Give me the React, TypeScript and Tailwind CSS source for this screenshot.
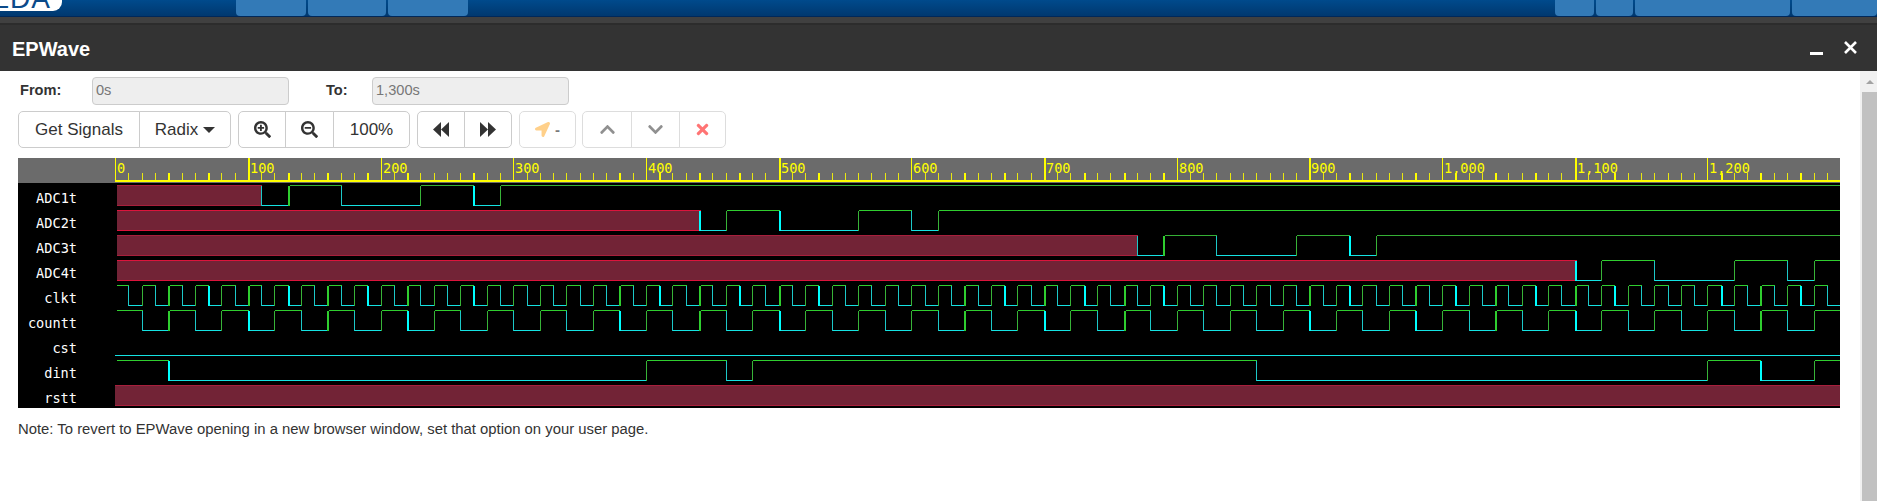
import { FaSearchPlus, FaSearchMinus, FaLocationArrow, FaChevronUp, FaChevronDown, FaTimes } from "react-icons/fa";

type Ev = [number, "x" | 0 | 1];
type Signal = { name: string; events: Ev[]; flush?: boolean; dim?: boolean };

const END = 1300;

// pixel columns where the canvas drew a 2px edge
const THICK = new Set([
  40, 70, 100, 130, 160, 190, 220, 270, 380, 410, 440, 470, 500, 530, 640, 670, 700, 730, 760, 790, 900, 930, 980, 1010,
  1040, 1070, 1100, 1130, 1210, 1240, 1270, 1300,
]);

const px = (t: number) => Math.floor(115.7 + 1.3268 * t) - 115;
const lw = (t: number) => (THICK.has(t) ? 2 : 1);

const square = (period: number): Ev[] => {
  const out: Ev[] = [];
  for (let t = 0; t < END; t += period / 2) out.push([t, (t / (period / 2)) % 2 === 0 ? 1 : 0]);
  return out;
};

const SIGNALS: Signal[] = [
  { name: "ADC1t", dim: true, events: [[0, "x"], [110, 0], [130, 1], [170, 0], [230, 1], [270, 0], [290, 1]] },
  { name: "ADC2t", events: [[0, "x"], [440, 0], [460, 1], [500, 0], [560, 1], [600, 0], [620, 1]] },
  { name: "ADC3t", dim: true, events: [[0, "x"], [770, 0], [790, 1], [830, 0], [890, 1], [930, 0], [950, 1]] },
  { name: "ADC4t", events: [[0, "x"], [1100, 0], [1120, 1], [1160, 0], [1220, 1], [1260, 0], [1280, 1]] },
  { name: "clkt", events: square(20) },
  { name: "countt", events: square(40) },
  { name: "cst", flush: true, events: [[0, 0]] },
  { name: "dint", events: [[0, 1], [40, 0], [400, 1], [460, 0], [480, 1], [860, 0], [1200, 1], [1240, 0], [1280, 1]] },
  { name: "rstt", flush: true, dim: true, events: [[0, "x"]] },
];

function Row({ signal, index }: { signal: Signal; index: number }) {
  const high = 27 + 25 * index;
  const low = high + 20;
  const green = signal.dim ? "#35b035" : "#2fce2f";
  const thinGreen = "#37b337";
  return (
    <g shapeRendering="crispEdges">
      {signal.events.map(([t, v], k) => {
        const next = k + 1 < signal.events.length ? signal.events[k + 1][0] : END + 20;
        const first = k === 0;
        const from = first ? (signal.flush ? px(t) : px(t) + 2) : px(t) + lw(t);
        const to = px(next) + 1;
        if (v === "x") {
          const edge = signal.dim ? "#a81f3c" : "#dc143c";
          return (
            <g key={t}>
              <rect x={from} y={high} width={to - from} height={21} fill="#722336" />
              <rect x={from} y={high} width={to - from} height={1} fill={edge} />
              <rect x={from} y={low} width={to - from} height={1} fill={edge} />
              <rect x={px(next)} y={high} width={lw(next)} height={21} fill={edge} />
            </g>
          );
        }
        const y = v === 1 ? high : low;
        const flat = v === 1 ? green : "#14e2e2";
        const wall = v === 1 ? (THICK.has(t) ? "#2fce2f" : thinGreen) : THICK.has(t) ? "#00ffff" : "#1cc8c8";
        return (
          <g key={t}>
            <rect x={from} y={y} width={to - from} height={1} fill={flat} />
            {!first && <rect x={px(t)} y={high + 1} width={lw(t)} height={20} fill={wall} />}
          </g>
        );
      })}
    </g>
  );
}

function Ruler() {
  const ticks: number[] = [];
  for (let t = 0; t <= END; t += 10) ticks.push(t);
  return (
    <g>
      <rect x={0} y={0} width={1725} height={25} fill="#6b6b6b" shapeRendering="crispEdges" />
      {ticks.map((t) => (
        <rect
          key={t}
          x={px(t)}
          y={t % 100 === 0 ? 0 : 15}
          width={lw(t)}
          height={t % 100 === 0 ? 22 : 7}
          fill="#ffff00"
          opacity={THICK.has(t) || t % 100 === 0 ? 1 : 0.85}
          shapeRendering="crispEdges"
        />
      ))}
      <rect x={0} y={22} width={1725} height={2} fill="#ffff00" shapeRendering="crispEdges" />
      {ticks
        .filter((t) => t % 100 === 0 && t < END)
        .map((t) => (
          <text key={t} x={px(t) + 2} y={15} fill="#ffff00" className="font-['DejaVu_Sans_Mono',monospace] text-[13.6px]">
            {t.toLocaleString("en-US")}
          </text>
        ))}
    </g>
  );
}

function WavePanel() {
  return (
    <div className="mt-[10px] flex h-[250px] w-[1822px] overflow-hidden bg-black">
      <div className="w-[97px] shrink-0">
        <div className="mb-[2px] h-[25px] bg-[#6b6b6b]" />
        {SIGNALS.map((s) => (
          <div
            key={s.name}
            className="flex h-[25px] items-center justify-end pr-[38px] pt-[2px] font-['DejaVu_Sans_Mono',monospace] text-[13.6px] text-white"
          >
            {s.name}
          </div>
        ))}
      </div>
      <svg width={1725} height={250} className="shrink-0">
        <Ruler />
        {SIGNALS.map((s, i) => (
          <Row key={s.name} signal={s} index={i} />
        ))}
      </svg>
    </div>
  );
}

function Btn({ w, children }: { w: string; children: React.ReactNode }) {
  return (
    <div
      className={`${w} -ml-px flex h-full items-center justify-center border border-[#ccc] bg-white first:ml-0 first:rounded-l-[5px] last:rounded-r-[5px]`}
    >
      {children}
    </div>
  );
}

function Group({ children, className = "" }: { children: React.ReactNode; className?: string }) {
  return <div className={`flex h-[37px] ${className}`}>{children}</div>;
}

function Toolbar() {
  return (
    <div className="mt-[6px] flex text-[17px] text-[#333]">
      <Group>
        <Btn w="w-[122px]">Get Signals</Btn>
        <Btn w="w-[92px]">
          Radix
          <span className="ml-[5px] mt-[1px] h-0 w-0 border-x-[6px] border-t-[6px] border-x-transparent border-t-[#333]" />
        </Btn>
      </Group>
      <Group className="ml-[7px]">
        <Btn w="w-[48px]">
          <FaSearchPlus size={17} />
        </Btn>
        <Btn w="w-[49px]">
          <FaSearchMinus size={17} />
        </Btn>
        <Btn w="w-[77px]">100%</Btn>
      </Group>
      <Group className="ml-[7px]">
        <Btn w="w-[48px]">
          <svg width="16" height="15" viewBox="0 0 16 15" fill="#333">
            <polygon points="0,7.5 8,0 8,15" />
            <polygon points="8,7.5 16,0 16,15" />
          </svg>
        </Btn>
        <Btn w="w-[48px]">
          <svg width="16" height="15" viewBox="0 0 16 15" fill="#333">
            <polygon points="0,0 8,7.5 0,15" />
            <polygon points="8,0 16,7.5 8,15" />
          </svg>
        </Btn>
      </Group>
      <Group className="ml-[7px] opacity-65">
        <Btn w="w-[57px]">
          <FaLocationArrow size={15} className="text-[#ffb84d]" />
          <span className="ml-[5px] text-[15px] font-bold leading-none">-</span>
        </Btn>
      </Group>
      <Group className="ml-[6px] opacity-65">
        <Btn w="w-[50px]">
          <FaChevronUp size={17} className="text-[#555]" />
        </Btn>
        <Btn w="w-[49px]">
          <FaChevronDown size={17} className="text-[#555]" />
        </Btn>
        <Btn w="w-[47px]">
          <FaTimes size={17} className="text-[#ff2a2a]" />
        </Btn>
      </Group>
    </div>
  );
}

const TABS_LEFT = ["w-[70px]", "w-[78px]", "w-[80px]"];
const TABS_RIGHT = ["w-[39px]", "w-[37px]", "w-[155px]", "w-[85px]"];

function TopBar() {
  return (
    <div className="flex h-[17px] justify-between border-b border-[#00285a] bg-gradient-to-b from-[#004a8c] to-[#00386f]">
      <div className="flex">
        <div className="mr-[174px] flex h-[11px] w-[62px] items-end justify-end overflow-hidden rounded-br-[9px] bg-white pr-[11px]">
          <span className="mb-[-2px] text-[28px] leading-none tracking-[1px] text-[#0b4a8a]">EDA</span>
        </div>
        <div className="flex gap-[2px]">
          {TABS_LEFT.map((w) => (
            <div key={w} className={`${w} h-[16px] rounded-b-[4px] bg-[#337ab7]`} />
          ))}
        </div>
      </div>
      <div className="flex gap-[2px]">
        {TABS_RIGHT.map((w) => (
          <div key={w} className={`${w} h-[16px] rounded-b-[4px] bg-[#337ab7]`} />
        ))}
      </div>
    </div>
  );
}

export default function App() {
  return (
    <div className="flex h-[501px] w-[1877px] flex-col overflow-hidden bg-white font-['Liberation_Sans',Arial,sans-serif]">
      <TopBar />
      <div className="h-[8px] border-b-2 border-[#2c2c2c] bg-[#404040]" />
      <div className="flex h-[46px] items-center justify-between bg-[#333] pl-[12px] pr-[20px]">
        <span className="pt-[2px] text-[20px] font-bold text-white">EPWave</span>
        <div className="flex items-start">
          <div className="mr-[21px] mt-[11px] h-[3px] w-[13px] bg-white" />
          <svg width="13" height="13" viewBox="0 0 13 13" stroke="white" strokeWidth="2.6">
            <path d="M1 1 L12 12 M12 1 L1 12" />
          </svg>
        </div>
      </div>

      <div className="flex flex-1">
        <div className="flex-1 pl-[18px] pt-[6px]">
          <div className="flex h-[28px] items-center text-[14.6px] text-[#333]">
            <span className="ml-[2px] w-[72px] font-bold">From:</span>
            <div className="flex h-full w-[197px] items-center rounded-[4px] border border-[#ccc] bg-[#eee] pl-[3px] text-[#777]">
              0s
            </div>
            <span className="ml-[37px] w-[46px] font-bold">To:</span>
            <div className="flex h-full w-[197px] items-center rounded-[4px] border border-[#ccc] bg-[#eee] pl-[3px] text-[#777]">
              1,300s
            </div>
          </div>
          <Toolbar />
          <WavePanel />
          <p className="mt-[13px] text-[14.85px] leading-[16px] text-[#333]">
            Note: To revert to EPWave opening in a new browser window, set that option on your user page.
          </p>
        </div>
        <div className="flex w-[17px] flex-col bg-[#f1f1f1] pl-[2px]">
          <div className="flex h-[21px] items-center justify-center">
            <span className="h-0 w-0 border-x-[4px] border-b-[4px] border-x-transparent border-b-[#a3a3a3]" />
          </div>
          <div className="flex-1 bg-[#c1c1c1]" />
        </div>
      </div>
    </div>
  );
}
